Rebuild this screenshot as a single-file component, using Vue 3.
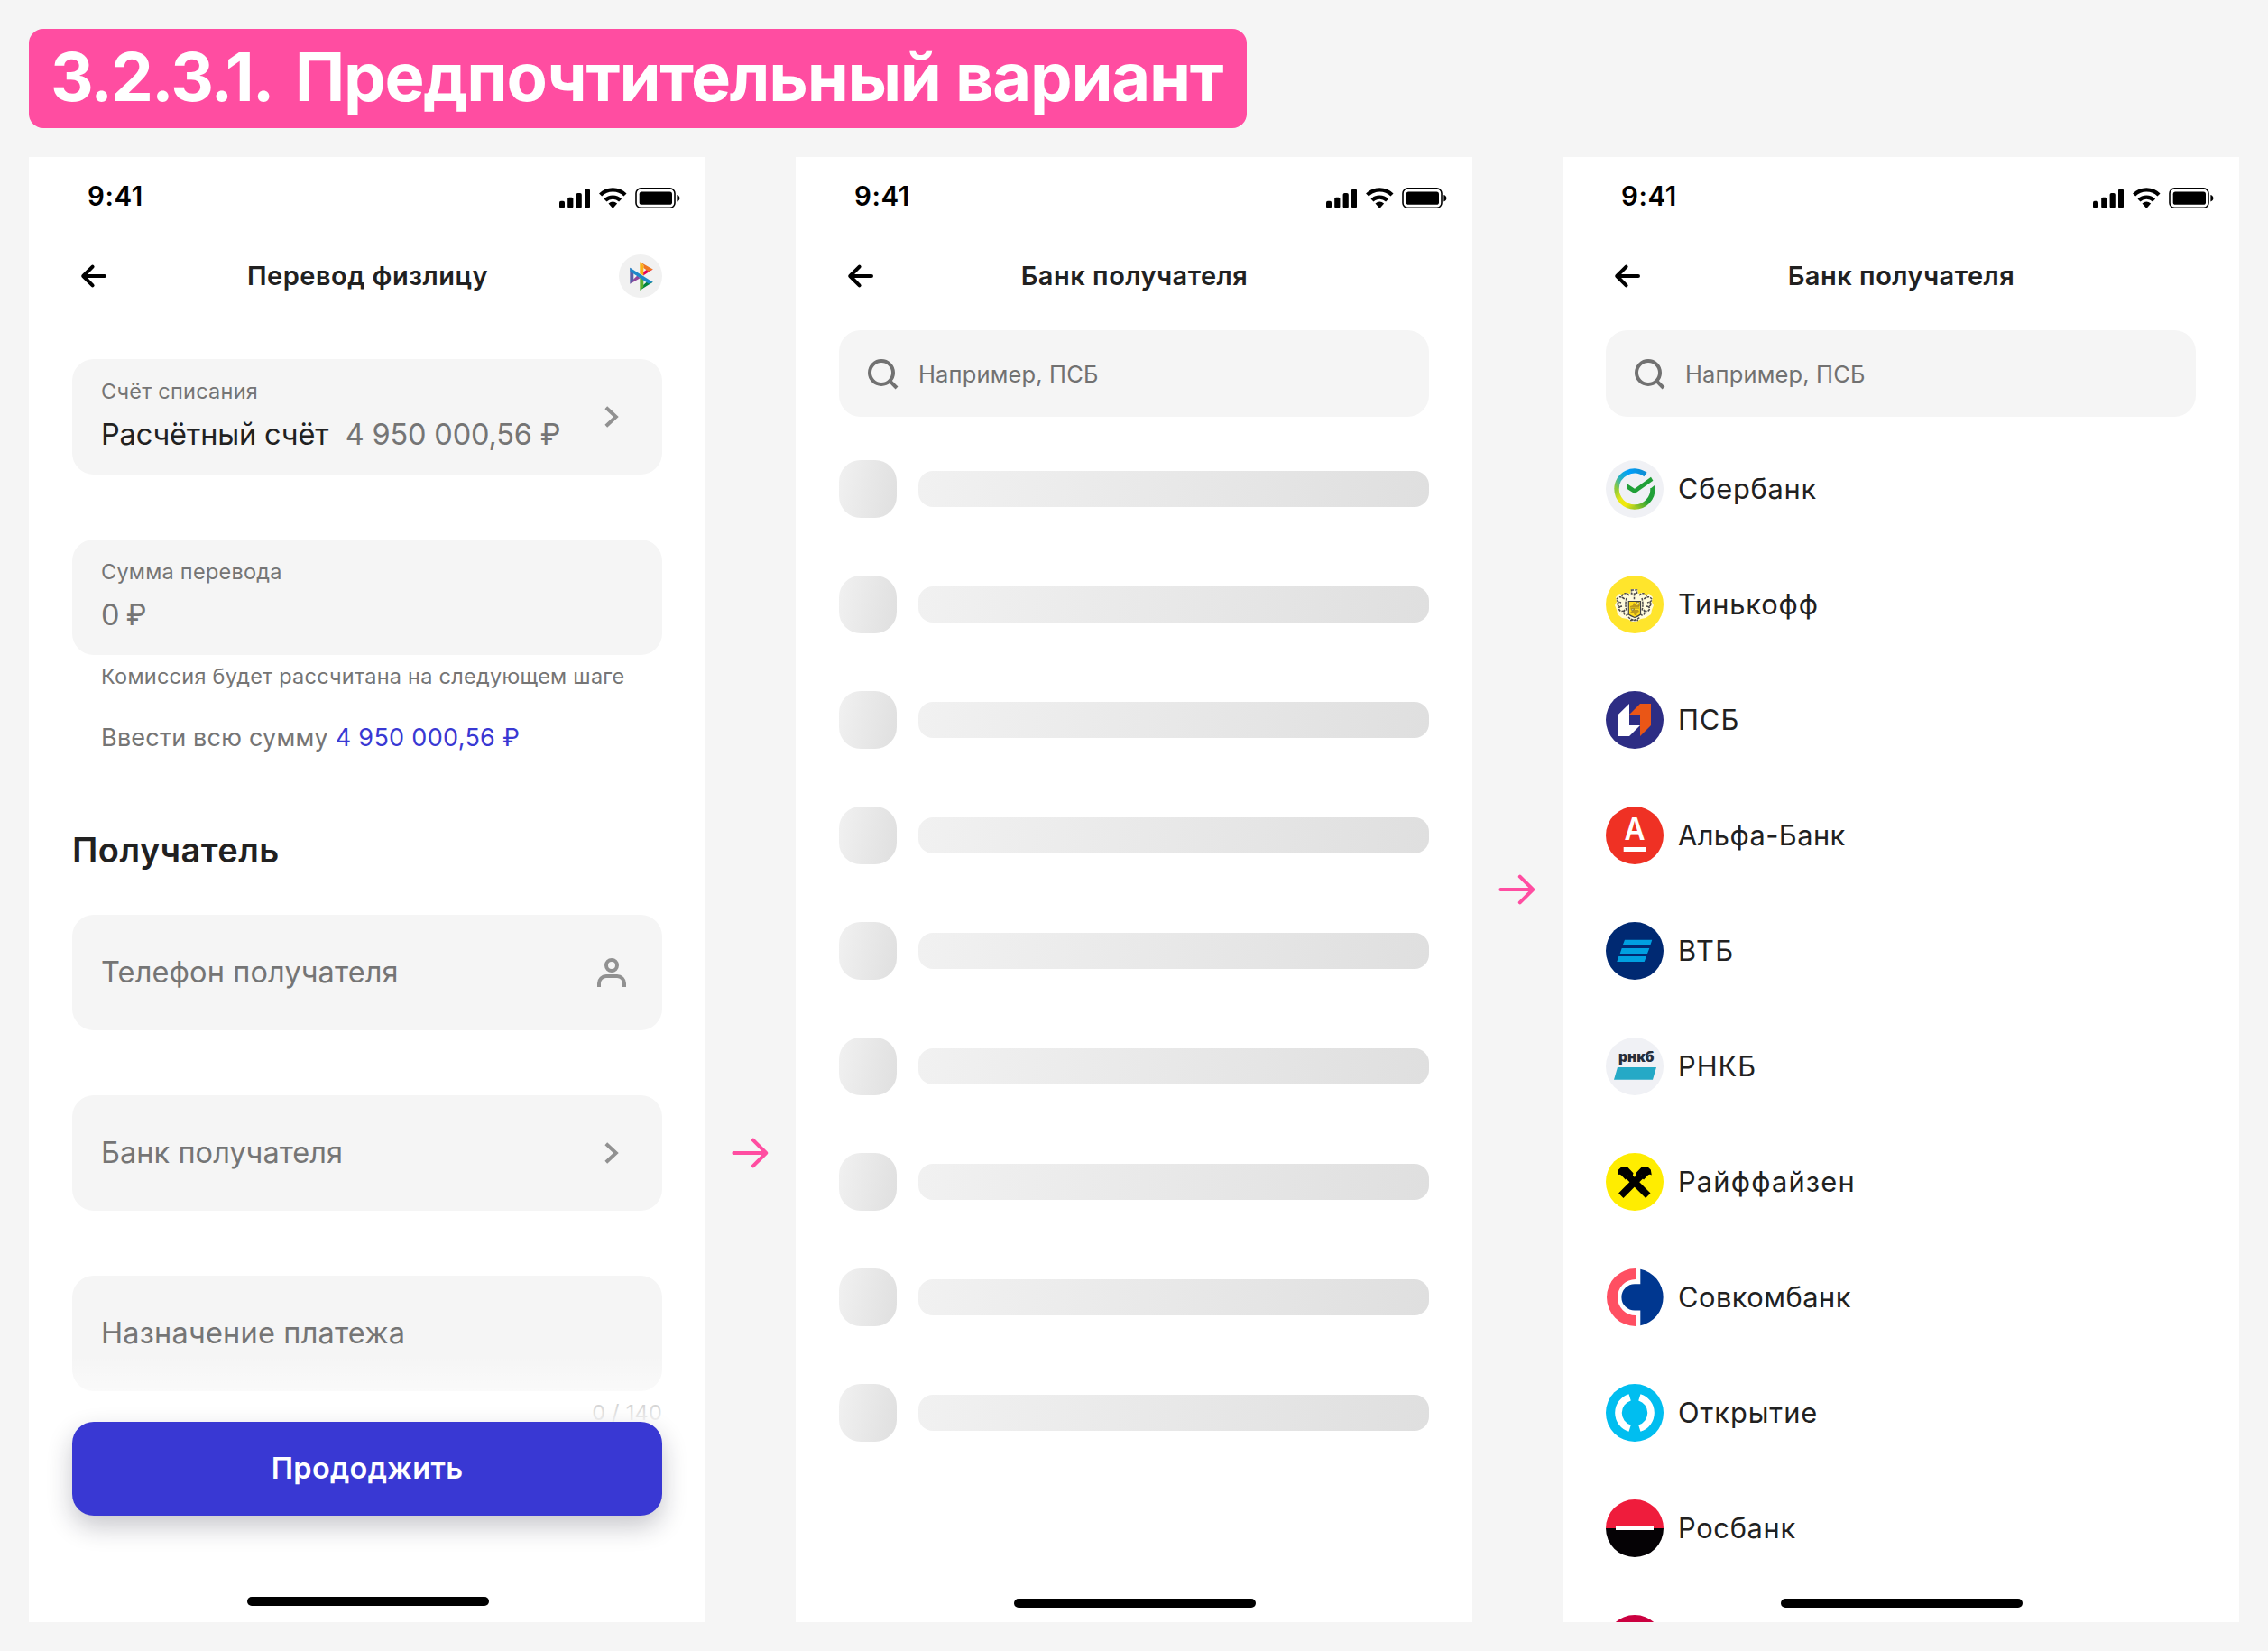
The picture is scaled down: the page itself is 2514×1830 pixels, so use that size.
<script setup>
import { h } from 'vue'

const banks = [
  { id: 'sber', name: 'Сбербанк', track: 0.75 },
  { id: 'tinkoff', name: 'Тинькофф', track: 0.9 },
  { id: 'psb', name: 'ПСБ', track: 1 },
  { id: 'alfa', name: 'Альфа-Банк', track: 0.45 },
  { id: 'vtb', name: 'ВТБ', track: 1.5 },
  { id: 'rnkb', name: 'РНКБ', track: 1 },
  { id: 'raif', name: 'Райффайзен', track: 1.2 },
  { id: 'sovcom', name: 'Совкомбанк', track: 0.5 },
  { id: 'open', name: 'Открытие', track: 0.95 },
  { id: 'ros', name: 'Росбанк', track: 0.7 },
  { id: 'next', name: '', track: 0 },
]

// iOS status icons: signal, wi-fi, battery
const StatusIcons = () =>
  h('svg', { width: 134, height: 24, viewBox: '0 0 134 24' }, [
    h('rect', { x: 0, y: 14.7, width: 6, height: 8, rx: 1.8 }),
    h('rect', { x: 9.2, y: 10.7, width: 6.2, height: 12, rx: 1.8 }),
    h('rect', { x: 18.6, y: 6, width: 6.2, height: 16.7, rx: 1.8 }),
    h('rect', { x: 28, y: 1.3, width: 6, height: 21.4, rx: 1.8 }),
    h('path', { d: 'M45.6 8A19.5 19.5 0 0 1 73 8', fill: 'none', stroke: '#000', 'stroke-width': 4.4 }),
    h('path', { d: 'M51 14A11.8 11.8 0 0 1 67.6 14', fill: 'none', stroke: '#000', 'stroke-width': 4.2 }),
    h('path', { d: 'M54.5 17.6Q59.3 13.6 64.1 17.6L59.3 22.9Z' }),
    h('rect', { x: 85, y: 0.9, width: 43, height: 21.4, rx: 5.4, fill: 'none', stroke: '#000', 'stroke-width': 1.6 }),
    h('rect', { x: 88.7, y: 4.6, width: 36.3, height: 14.2, rx: 2.6 }),
    h('path', { d: 'M130.4 8v7.4q3-1 3-3.7t-3-3.7z' }),
  ])

const BackIcon = () =>
  h('svg', { width: 32, height: 32, viewBox: '0 0 32 32', fill: 'none', stroke: '#000', 'stroke-width': 4, 'stroke-linecap': 'round', 'stroke-linejoin': 'round' }, [
    h('path', { d: 'M28 16H4.6M14.6 5.6L4.200 16l10.4 10.4' }),
  ])

const Chevron = () =>
  h('svg', { width: 16, height: 24, viewBox: '0 0 16 24', fill: 'none', stroke: '#919191', 'stroke-width': 4 }, [
    h('path', { d: 'M1.8 1.8L12.8 12L1.8 22.2' }),
  ])

const NextArrow = () =>
  h('svg', { width: 42, height: 36, viewBox: '0 0 42 36', fill: 'none', stroke: '#ff4da1', 'stroke-width': 4, 'stroke-linecap': 'round', 'stroke-linejoin': 'round' }, [
    h('path', { d: 'M3.4 18H39M24.8 3.7L39.2 18L24.8 32.3' }),
  ])

const SearchIcon = () =>
  h('svg', { width: 36, height: 36, viewBox: '0 0 36 36', fill: 'none', stroke: '#717171', 'stroke-width': 4 }, [
    h('circle', { cx: 17, cy: 17, r: 13 }),
    h('path', { d: 'M26.2 26.2L34 34' }),
  ])
</script>

<template>
  <main class="board">
    <h1 class="badge"><span class="num">3.2.3.1.</span><span class="title">Предпочтительный вариант</span></h1>

    <div class="flow">
      <section class="phone">
        <div class="status"><span class="time">9:41</span><StatusIcons class="sys" /></div>
        <header class="nav">
          <BackIcon />
          <h2>Перевод физлицу</h2>
          <svg class="avatar" viewBox="0 0 48 48">
            <circle cx="24" cy="24" r="24" fill="#f1f1f1" />
            <path d="M37.7 16.5L27 23.5V19.6L32.6 15.8Z" fill="#e4005b" />
            <path d="M23.3 8.3L37.7 16.5L33 19L27.3 15V12Z" fill="#ee7623" />
            <path d="M23.3 8.3L27.3 12V23.6L23.3 21.3Z" fill="#fbb218" />
            <path d="M12.3 32.7L23.6 26.2L20.4 23.4L16.2 27.4Z" fill="#93459a" />
            <path d="M12.3 14.8L16.3 18V28.6L12.3 32.7Z" fill="#5b5ea6" />
            <path d="M23.3 39.7L37.7 30.7L32 29.6L27 34Z" fill="#00853e" />
            <path d="M23.3 24.6L27.3 27V36L23.3 39.7Z" fill="#5db12f" />
            <path d="M12.3 14.8L37.7 30.7L33 32.4L12.6 19Z" fill="#1e88c9" />
          </svg>
        </header>

        <div class="form">
          <div class="field filled">
            <div class="text">
              <span class="label">Счёт списания</span>
              <span class="value"><b class="acc">Расчётный счёт</b><span class="sum">4 950 000,56 ₽</span></span>
            </div>
            <Chevron class="chev" />
          </div>

          <div class="field filled second">
            <div class="text">
              <span class="label">Сумма перевода</span>
              <span class="value zero">0 ₽</span>
            </div>
          </div>
          <p class="hint">Комиссия будет рассчитана на следующем шаге</p>
          <p class="all">Ввести всю сумму <a>4 950 000,56 ₽</a></p>

          <h3>Получатель</h3>
          <div class="field">
            <span class="placeholder phone-ph">Телефон получателя</span>
            <svg class="person" width="32" height="32" viewBox="0 0 32 32" fill="none" stroke="#919191" stroke-width="4">
              <circle cx="16" cy="8" r="6" />
              <path d="M2 32v-4a8 8 0 0 1 8-8h12a8 8 0 0 1 8 8v4" />
            </svg>
          </div>
          <div class="field second"><span class="placeholder">Банк получателя</span><Chevron class="chev" /></div>
          <div class="field second"><span class="placeholder purpose">Назначение платежа</span></div>
          <p class="counter">0 / 140</p>
        </div>

        <footer class="actions"><button type="button">Прододжить</button></footer>
        <i class="home"></i>
      </section>

      <div class="gap"><NextArrow class="to-list" /></div>

      <section class="phone">
        <div class="status"><span class="time">9:41</span><StatusIcons class="sys" /></div>
        <header class="nav"><BackIcon /><h2>Банк получателя</h2></header>
        <div class="search"><SearchIcon /><span>Например, ПСБ</span></div>
        <ul class="list">
          <li v-for="n in 9" :key="n"><i class="sk-icon"></i><i class="sk-line"></i></li>
        </ul>
        <i class="home low"></i>
      </section>

      <div class="gap"><NextArrow class="to-result" /></div>

      <section class="phone">
        <div class="status"><span class="time">9:41</span><StatusIcons class="sys" /></div>
        <header class="nav"><BackIcon /><h2>Банк получателя</h2></header>
        <div class="search"><SearchIcon /><span>Например, ПСБ</span></div>
        <ul class="list banks">
          <li v-for="b in banks" :key="b.id">
            <svg class="logo" viewBox="0 0 64 64">
              <template v-if="b.id === 'sber'">
                <defs>
                  <linearGradient id="sb1" gradientUnits="userSpaceOnUse" x1="40" y1="12" x2="12" y2="32">
                    <stop offset="0" stop-color="#0f8fd6" /><stop offset=".35" stop-color="#009ffb" /><stop offset=".68" stop-color="#22afc8" /><stop offset="1" stop-color="#8fcb3c" />
                  </linearGradient>
                  <linearGradient id="sb2" gradientUnits="userSpaceOnUse" x1="12" y1="32" x2="32" y2="52">
                    <stop offset="0" stop-color="#8fcb3c" /><stop offset=".4" stop-color="#e9e814" /><stop offset=".7" stop-color="#f2e90c" /><stop offset="1" stop-color="#a5cc24" />
                  </linearGradient>
                  <linearGradient id="sb3" gradientUnits="userSpaceOnUse" x1="32" y1="52" x2="50" y2="38">
                    <stop offset="0" stop-color="#a5cc24" /><stop offset=".7" stop-color="#21a038" />
                  </linearGradient>
                </defs>
                <circle cx="32" cy="32" r="32" fill="#f0f1f5" />
                <g fill="none" stroke-width="5.4">
                  <path d="M44 16A20 20 0 0 0 12 32" stroke="url(#sb1)" />
                  <path d="M12 31.8A20 20 0 0 0 32 52" stroke="url(#sb2)" />
                  <path d="M31.8 52A20 20 0 0 0 52 31" stroke="url(#sb3)" />
                </g>
                <path d="M49.3 31.7L54 28L54.7 32H49.3Z" fill="#21a038" />
                <path d="M23.3 26L32 31.7L50 18.7L52.4 22.7L32 37.3L23.3 31.7Z" fill="#21a038" />
              </template>
              <template v-else-if="b.id === 'tinkoff'">
                <circle cx="32" cy="32" r="32" fill="#ffe52c" />
                <path d="M28 15h7l1 5 5-1 3 3 4-2 4 4-1 5 2 4-2 5-1 5-6 4-5 1-5 3h-5l-5-3-6-1-5-4-1-5-2-5 2-4-1-5 4-4 4 2 3-3 5 1z" fill="#fffdf0" opacity=".9" />
                <g fill="none" stroke="#4d4b4c" stroke-width="1.5" stroke-dasharray="2.6 1.1">
                  <path d="M28.500 16h6v4h-6zM31.500 20v7" />
                  <path d="M26 22q-4-4-7-1t2 5q-5-4-8-1t4 5q-5-1-4 2t5 2q-5 1-3 4t6 0q-3 5 2 6l4-3" />
                  <path d="M37 22q4-4 7-1t-2 5q5-4 8-1t-4 5q5-1 4 2t-5 2q5 1 3 4t-6 0q3 5-2 6l-4-3" />
                  <path d="M23 25q-2 7 0 14M40 25q2 7 0 14M25 46q6 6 13 0M27 49.500h9" />
                </g>
                <path d="M25.300 28.500H38.500V43Q37 44.500 32 46.500Q27 44.500 25.300 43Z" fill="#ffdc1c" stroke="#454545" stroke-width="1.2" />
                <path d="M27 34l3-1 1-3 3 3h3v2H27zM27 41l3-3h6l1 2-2 1-1 3h-2l-1-2z" fill="#bd991c" />
                <path d="M34 29.500h3v4zM28 37h4l-3 2zM27 36h10" fill="#fff5b0" stroke="#6d5d24" stroke-width=".6" />
              </template>
              <template v-else-if="b.id === 'psb'">
                <circle cx="32" cy="32" r="32" fill="#2d2d84" />
                <path d="M14 25.700L26 14V38H38L26 50H14Z" fill="#fff" />
                <path d="M26 26L38 14H50V38L38 50V26Z" fill="#ea5616" />
              </template>
              <template v-else-if="b.id === 'alfa'">
                <circle cx="32" cy="32" r="32" fill="#ef3124" />
                <text class="alfa" x="20.400" y="37" textLength="23" lengthAdjust="spacingAndGlyphs">А</text>
                <rect x="19.700" y="45" width="24.300" height="5" fill="#fff" />
              </template>
              <template v-else-if="b.id === 'vtb'">
                <circle cx="32" cy="32" r="32" fill="#002972" />
                <path d="M21 19.700H51.300L49.300 25.800H18.700ZM17.700 29H48.300L46 35H15.700ZM14.300 38H45L42.700 44H12.300Z" fill="#00a0e0" />
              </template>
              <template v-else-if="b.id === 'rnkb'">
                <circle cx="32" cy="32" r="32" fill="#f0f1f5" />
                <text class="rnkb" x="14" y="27.200" textLength="39.600" lengthAdjust="spacingAndGlyphs">рнкб</text>
                <path d="M13 33H56L52 46.700H9Z" fill="#25a9c6" />
              </template>
              <template v-else-if="b.id === 'raif'">
                <circle cx="32" cy="32" r="32" fill="#ffed00" />
                <path d="M16.800 47.300L39 25M46.800 47.300L24.600 25" stroke="#000" stroke-width="7.600" />
                <path d="M13 24.600L14 18.500L17 15.700Q20.500 14 24.500 16L30.500 22.300L28.500 31L25.300 29L24.200 24.500L23.600 28L21.700 29.500L17.300 24.700Q15 23 13 24.600Z" />
                <path d="M50.800 24.600L49.800 18.500L46.800 15.700Q43.300 14 39.300 16L33.300 22.300L35.300 31L38.500 29L39.600 24.500L40.200 28L42.100 29.500L46.500 24.700Q48.800 23 50.800 24.600Z" />
              </template>
              <template v-else-if="b.id === 'sovcom'">
                <path d="M33 0A32 32 0 0 0 33 64V52A20 20 0 0 1 33 12Z" fill="#ff4f62" />
                <path d="M38.300 .7A32 32 0 0 1 38.300 63.300V46.500H32A14.600 14.600 0 0 1 32 17.300H38.300Z" fill="#003790" />
              </template>
              <template v-else-if="b.id === 'open'">
                <circle cx="32" cy="32" r="32" fill="#00bef0" />
                <path d="M26.650 14.800A18 18 0 0 0 26.650 49.200M37.350 14.800A18 18 0 0 1 37.350 49.200" fill="none" stroke="#fff" stroke-width="7.600" />
              </template>
              <template v-else-if="b.id === 'ros'">
                <path d="M0 32A32 32 0 0 1 64 32Z" fill="#ef1c3c" />
                <path d="M0 32A32 32 0 0 0 64 32Z" fill="#050205" />
                <rect x="11" y="30" width="42" height="4" fill="#fff" />
              </template>
              <circle v-else cx="32" cy="32" r="32" fill="#cb0040" />
            </svg>
            <span class="name" :style="{ letterSpacing: b.track + 'px' }">{{ b.name }}</span>
          </li>
        </ul>
        <i class="home low"></i>
      </section>
    </div>
  </main>
</template>

<style>
body {
  margin: 0;
  background: #f5f5f5;
}
</style>

<style scoped>
.board {
  box-sizing: border-box;
  width: 2514px;
  height: 1830px;
  padding: 32px;
  overflow: hidden;
  background: #f5f5f5;
  font-family: Inter, 'Liberation Sans', sans-serif;
  color: #212121;
}
h1, h2, h3, p, ul {
  margin: 0;
  padding: 0;
}
svg {
  display: block;
  flex: none;
}
.badge {
  box-sizing: border-box;
  display: flex;
  width: 1350px;
  height: 110px;
  padding-left: 24px;
  border-radius: 16px;
  background: #ff4da1;
  color: #fff;
  font-size: 74px;
  font-weight: 700;
  line-height: 107px;
  white-space: pre;
}
.num {
  width: 271px;
  letter-spacing: -1.84px;
}
.title {
  letter-spacing: -1.27px;
}
.flow {
  display: flex;
  margin-top: 32px;
}
.phone {
  position: relative;
  display: flex;
  flex-direction: column;
  width: 750px;
  height: 1624px;
  overflow: hidden;
  background: #fff;
}
.gap {
  width: 100px;
}
.to-list {
  margin: 1086px 0 0 28px;
}
.to-result {
  margin: 794px 0 0 28px;
}
.status {
  display: flex;
  justify-content: space-between;
  flex: none;
  box-sizing: border-box;
  height: 80px;
  padding: 23px 28px 0 65px;
}
.time {
  font-size: 29.5px;
  font-weight: 600;
  line-height: 40px;
  letter-spacing: 0.6px;
  color: #000;
}
.sys {
  margin-top: 11px;
}
.nav {
  display: grid;
  grid-template-columns: 48px 1fr 48px;
  align-items: center;
  flex: none;
  height: 104px;
  padding: 0 48px 0 56px;
}
.nav h2 {
  margin-left: -7px;
  text-align: center;
  font-size: 29px;
  font-weight: 600;
  line-height: 40px;
  letter-spacing: 0.5px;
}
.avatar {
  width: 48px;
  height: 48px;
}
.form {
  padding: 40px 48px 0;
}
.field {
  box-sizing: border-box;
  display: flex;
  align-items: center;
  justify-content: space-between;
  height: 128px;
  padding-left: 32px;
  border-radius: 24px;
  background: #f5f5f5;
}
.second {
  margin-top: 72px;
}
.text {
  display: flex;
  flex-direction: column;
  align-self: flex-start;
  gap: 12px;
  padding-top: 20px;
}
.label,
.hint,
.counter {
  font-size: 23.5px;
  line-height: 32px;
  letter-spacing: 0.25px;
  color: #757575;
}
.value {
  display: flex;
  gap: 18.5px;
  font-size: 32.5px;
  line-height: 40px;
  letter-spacing: -0.17px;
}
.acc {
  font-weight: 400;
}
.sum,
.zero {
  color: #757575;
}
.zero {
  letter-spacing: -1px;
}
.chev {
  margin-right: 48px;
}
.person {
  margin-right: 40px;
}
.hint {
  margin: 8px 0 0 32px;
}
.all {
  margin: 32px 0 0 32px;
  font-size: 27px;
  line-height: 40px;
  letter-spacing: 0.21px;
  color: #757575;
}
.all a {
  color: #3938d3;
  letter-spacing: 0.31px;
}
h3 {
  margin: 80px 0 48px;
  font-size: 38px;
  font-weight: 600;
  line-height: 48px;
  letter-spacing: 0.5px;
}
.placeholder {
  font-size: 32.5px;
  line-height: 40px;
  letter-spacing: 0.05px;
  color: #757575;
}
.phone-ph {
  letter-spacing: 0.12px;
}
.purpose {
  letter-spacing: 0.2px;
}
.counter {
  margin-top: 8px;
  text-align: right;
}
.actions {
  position: absolute;
  left: 0;
  right: 0;
  bottom: 0;
  box-sizing: border-box;
  height: 296px;
  padding: 74px 48px 0;
  background: linear-gradient(rgba(255, 255, 255, 0), #fff 80px);
}
.actions button {
  display: block;
  width: 654px;
  height: 104px;
  padding: 0;
  border: 0;
  border-radius: 24px;
  background: #3938d3;
  box-shadow: 0 12px 28px rgba(20, 22, 40, 0.24);
  color: #fff;
  font-family: inherit;
  font-size: 32.5px;
  font-weight: 600;
  line-height: 104px;
  letter-spacing: 0.33px;
}
.home {
  position: absolute;
  left: 242px;
  bottom: 18px;
  width: 268px;
  height: 10px;
  border-radius: 5px;
  background: #000;
}
.low {
  bottom: 16px;
}
.search {
  display: flex;
  align-items: center;
  flex: none;
  gap: 22px;
  height: 96px;
  margin: 8px 48px 0;
  padding-left: 30px;
  border-radius: 24px;
  background: #f5f5f5;
}
.search span {
  padding-top: 1px;
  font-size: 25.5px;
  line-height: 36px;
  letter-spacing: 0.15px;
  color: #717171;
}
.list {
  display: flex;
  flex-direction: column;
  gap: 64px;
  padding: 48px 48px 0;
  list-style: none;
}
.list li {
  display: flex;
  align-items: center;
  gap: 24px;
  height: 64px;
}
.banks li {
  gap: 16px;
}
.sk-icon,
.sk-line {
  background: linear-gradient(100deg, #f1f1f1, #dfdfdf);
}
.sk-icon {
  width: 64px;
  height: 64px;
  border-radius: 24px;
}
.sk-line {
  flex: 1;
  height: 40px;
  border-radius: 16px;
}
.logo {
  width: 64px;
  height: 64px;
}
.name {
  font-size: 30.8px;
  line-height: 40px;
}
.alfa {
  font-size: 34px;
  font-weight: 600;
  fill: #fff;
}
.rnkb {
  font-size: 15.5px;
  font-weight: 900;
  fill: #262f3d;
}
</style>
